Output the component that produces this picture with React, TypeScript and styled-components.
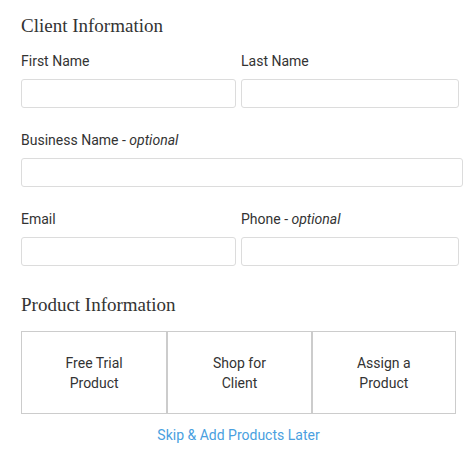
import React from 'react';
import styled, { createGlobalStyle } from 'styled-components';

const GlobalStyle = createGlobalStyle`
    body {
        margin: 0;
        background: #ffffff;
        font-family: Roboto, "Liberation Sans", sans-serif;
        color: #333333;
    }
`;

const Form = styled.div`
    width: 467px;
    padding: 14px 4px 0 21px;
    box-sizing: border-box;
`;

const SectionHeading = styled.h2`
    font-family: "Liberation Serif", serif;
    font-size: 19px;
    font-weight: normal;
    line-height: 24px;
    margin: 0 0 14px;
    color: #333333;
`;

const Row = styled.div<{ $half?: boolean; $last?: boolean }>`
    display: grid;
    grid-template-columns: ${props => (props.$half ? '215px 218px' : '442px')};
    column-gap: 5px;
    margin-bottom: ${props => (props.$last ? '27px' : '23px')};
`;

const Field = styled.div`
    display: flex;
    flex-direction: column;
`;

const Label = styled.label`
    font-size: 14px;
    line-height: 18px;
    margin-bottom: 9px;
    color: #333333;

    em {
        font-style: italic;
    }
`;

const Input = styled.input`
    height: 29px;
    box-sizing: border-box;
    border: 1px solid #dcdcdc;
    border-radius: 3px;
    padding: 0 8px;
    font-family: inherit;
    font-size: 14px;
    outline: none;
`;

const ProductGrid = styled.div`
    display: grid;
    grid-template-columns: repeat(3, 1fr);
    width: 435px;
    height: 83px;
    border: 1px solid #cccccc;
    box-sizing: border-box;
    margin-top: 14px;
`;

const ProductOption = styled.button`
    background: #ffffff;
    border: none;
    border-left: 2px solid #cccccc;
    font-family: Roboto, "Liberation Sans", sans-serif;
    font-size: 14px;
    line-height: 20px;
    color: #333333;
    padding: 0 20px;
    cursor: pointer;

    &:first-child {
        border-left: none;
    }
`;

const SkipLink = styled.a`
    display: block;
    width: 435px;
    text-align: center;
    margin-top: 12px;
    font-size: 14px;
    line-height: 18px;
    color: #4a9fe0;
    text-decoration: none;
    cursor: pointer;
`;

const products = [
    { key: 'trial', lines: ['Free Trial', 'Product'] },
    { key: 'shop', lines: ['Shop for', 'Client'] },
    { key: 'assign', lines: ['Assign a', 'Product'] },
];

const App: React.FC = () => {
    return (
        <>
            <GlobalStyle />
            <Form>
                <SectionHeading>Client Information</SectionHeading>
                <Row $half>
                    <Field>
                        <Label>First Name</Label>
                        <Input />
                    </Field>
                    <Field>
                        <Label>Last Name</Label>
                        <Input />
                    </Field>
                </Row>
                <Row>
                    <Field>
                        <Label>
                            Business Name - <em>optional</em>
                        </Label>
                        <Input />
                    </Field>
                </Row>
                <Row $half $last>
                    <Field>
                        <Label>Email</Label>
                        <Input />
                    </Field>
                    <Field>
                        <Label>
                            Phone - <em>optional</em>
                        </Label>
                        <Input />
                    </Field>
                </Row>
                <SectionHeading>Product Information</SectionHeading>
                <ProductGrid>
                    {products.map(product => (
                        <ProductOption key={product.key}>
                            {product.lines[0]}
                            <br />
                            {product.lines[1]}
                        </ProductOption>
                    ))}
                </ProductGrid>
                <SkipLink>Skip &amp; Add Products Later</SkipLink>
            </Form>
        </>
    );
};

export default App;
